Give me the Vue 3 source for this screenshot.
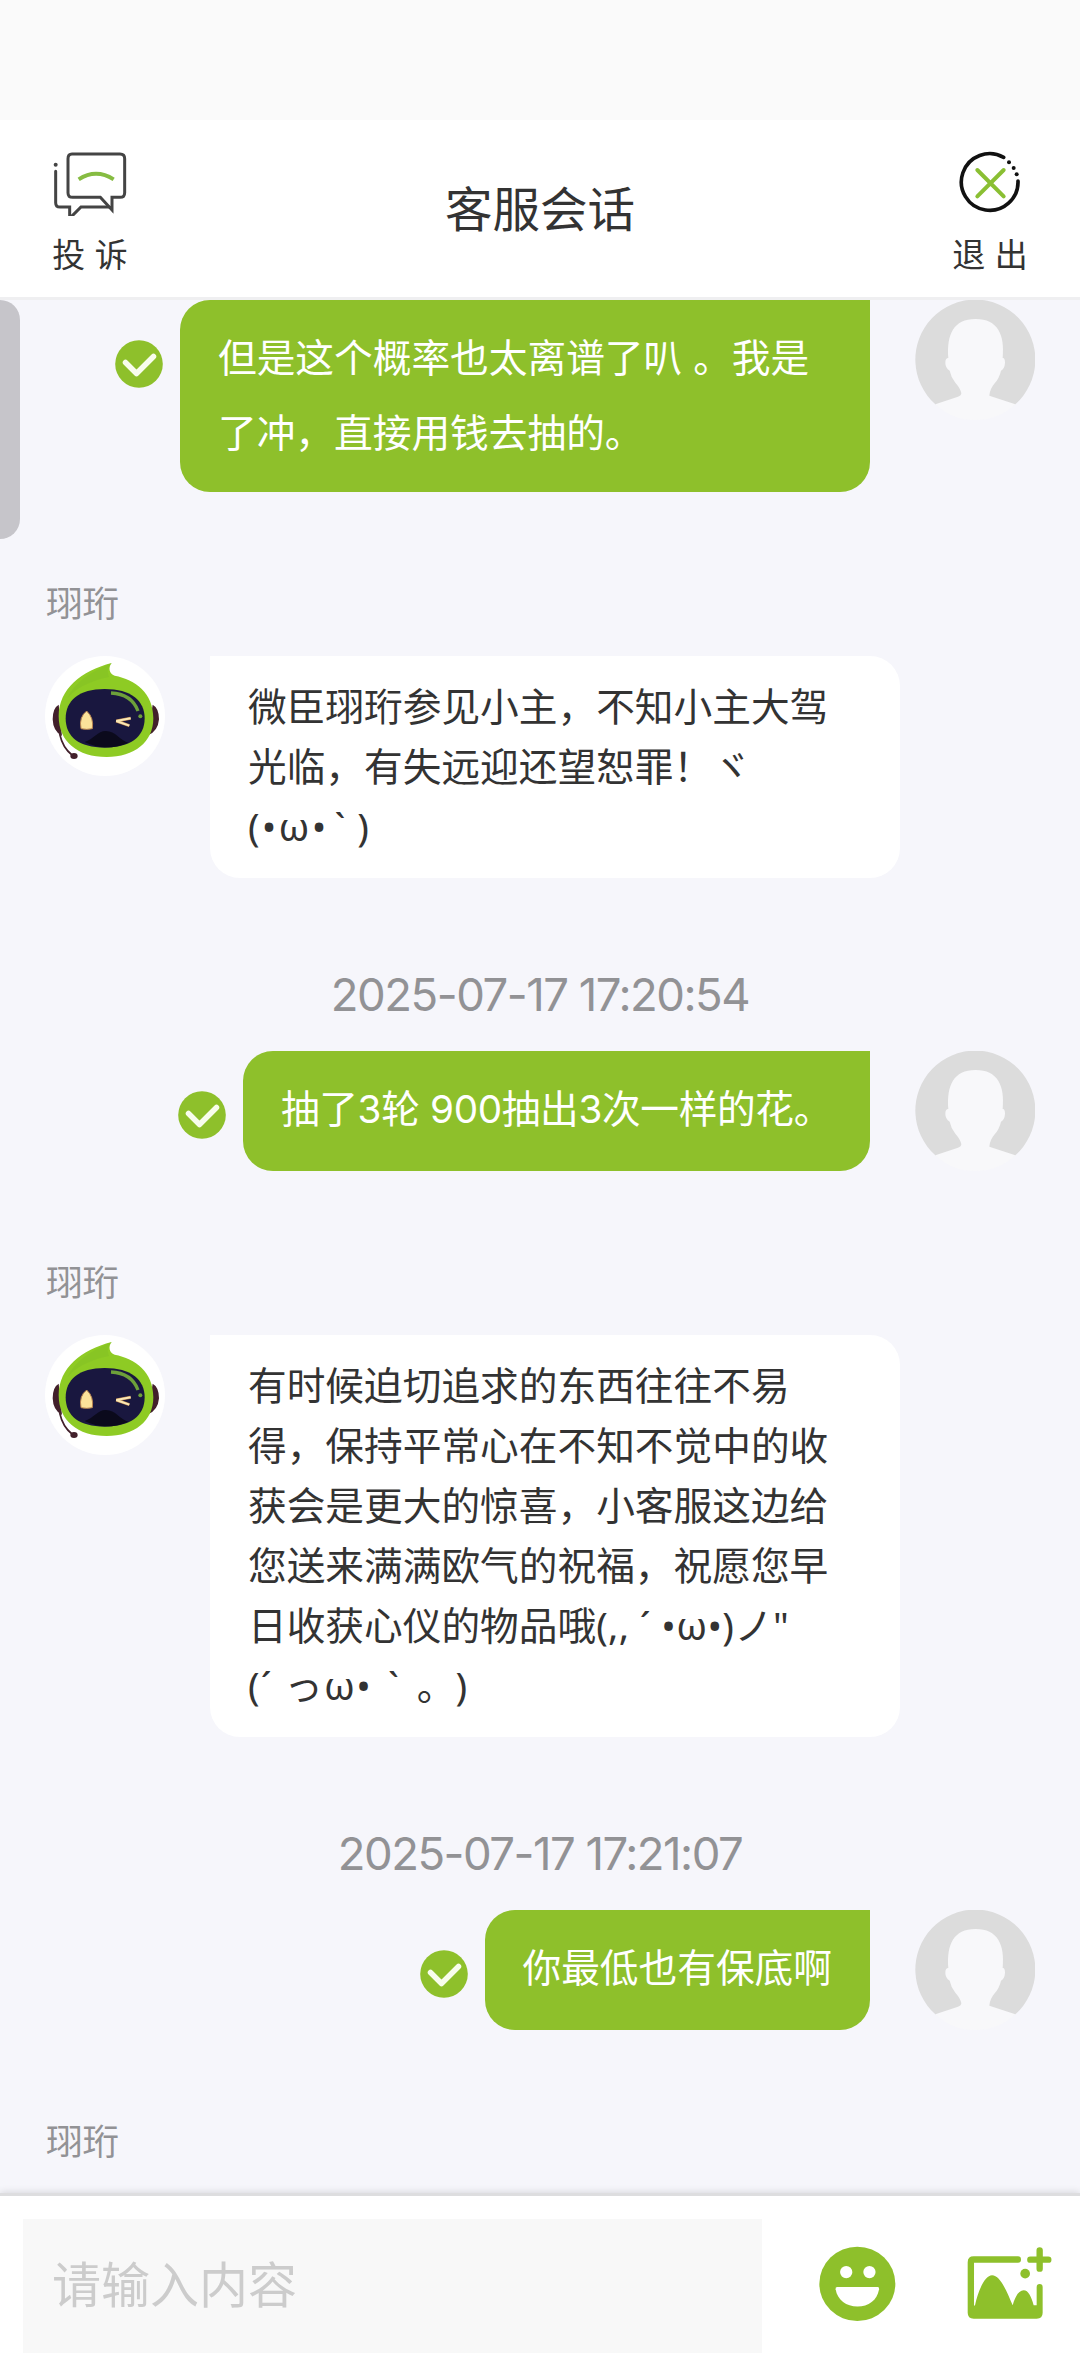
<script setup>
const messages = [
  { id: 1, from: 'user', wide: true, lines: [[{ t: '但是这个概率也太离谱了叭 。我是' }], [{ t: '了冲，直接用钱去抽的。' }]] },
  { id: 2, from: 'bot', lines: [[{ t: '微臣珝珩参见小主，不知小主大驾' }], [{ t: '光临，有失远迎还望恕罪！ヾ' }], [{ t: '(•ω•', c: 'face short' }, { t: '`', c: 'face tick' }, { t: ')', c: 'face' }]] },
  { id: 3, from: 'user', time: '2025-07-17 17:20:54', lines: [[{ t: '抽了3轮 900抽出3次一样的花。', c: 'mixed' }]] },
  {
    id: 4, from: 'bot', lines: [
      [{ t: '有时候迫切追求的东西往往不易' }],
      [{ t: '得，保持平常心在不知不觉中的收' }],
      [{ t: '获会是更大的惊喜，小客服这边给' }],
      [{ t: '您送来满满欧气的祝福，祝愿您早' }],
      [{ t: '日收获心仪的物品哦' }, { t: '(,, ´ •ω•)ノ"', c: 'face long' }],
      [{ t: '(´ っω•', c: 'face loose' }, { t: '`', c: 'face tick wide-tick' }, { t: '。)', c: 'face' }]
    ]
  },
  { id: 5, from: 'user', time: '2025-07-17 17:21:07', lines: [[{ t: '你最低也有保底啊' }]] },
  { id: 6, from: 'bot', lines: [] }
]
</script>

<template>
  <div class="screen">
    <div class="status"></div>
    <header class="header">
      <div class="action">
        <svg class="action-icon" viewBox="159 153 228 195" width="76" height="65" fill="none" stroke="#444" stroke-width="9">
          <path d="M219 162H363Q377 162 377 176V278Q377 292 363 292H339V330L304 292H221Q207 292 207 278V176Q207 162 219 162Z" />
          <path d="M170 214V308Q170 321 183 321H212V352M218 349L246 321H330" stroke-linecap="round" />
          <circle cx="170" cy="194" r="6" fill="#444" stroke="none" />
          <path d="M239 238Q291 205 344 238" stroke="#86bc42" stroke-width="12" />
        </svg>
        <span class="action-text">投 诉</span>
      </div>
      <h1 class="title">客服会话</h1>
      <div class="action">
        <svg class="action-icon" viewBox="696 153 228 195" width="76" height="65" fill="none" stroke-linecap="round">
          <path d="M851 172A85 85 0 1 0 894 243" stroke="#111" stroke-width="11" />
          <g fill="#111"><circle cx="867" cy="187" r="6" /><circle cx="881" cy="204" r="6" /><circle cx="890" cy="223" r="6" /></g>
          <path d="M772 210L851 289M851 210L772 289" stroke="#8abf33" stroke-width="12" />
        </svg>
        <span class="action-text">退 出</span>
      </div>
    </header>

    <main class="chat">
      <div class="scrollbar"></div>
      <section v-for="m in messages" :key="m.id" class="message">
        <div v-if="m.time" class="time">{{ m.time }}</div>
        <div v-if="m.from === 'bot'" class="name">珝珩</div>
        <div v-if="m.lines.length" class="row" :class="m.from">
          <svg v-if="m.from === 'bot'" class="avatar" viewBox="45 48 360 360">
            <circle cx="225" cy="228" r="180" fill="#fff" />
            <path d="M86 194Q68 204 68 238Q69 274 96 288ZM368 194Q387 204 387 238Q384 274 354 286Z" fill="#42202b" />
            <path d="M245 69C234 82 237 101 254 107C316 119 370 158 370 235C370 307 313 351 230 351C143 351 86 305 86 228C87 146 154 93 245 69Z" fill="#8ecb24" />
            <path d="M245 69C180 98 133 126 113 174C134 147 180 122 237 111C230 93 234 82 245 69Z" fill="#7fb925" opacity=".35" />
            <path d="M224 147C303 147 344 182 344 235C344 291 301 323 224 323C147 323 107 291 107 235C107 182 147 147 224 147Z" fill="#19173f" />
            <path d="M164 306C190 298 204 273 227 273C258 273 268 301 295 308Q225 337 164 306Z" fill="#0b0a1c" />
            <path d="M153 266Q146 231 170 213Q192 233 187 266Q170 270 153 266Z" fill="#fbe29a" stroke="#b98450" stroke-width="3" />
            <path d="M302 235L259 243L298 257" fill="none" stroke="#b98450" stroke-width="9" stroke-linejoin="bevel" />
            <path d="M302 235L259 243L298 257" fill="none" stroke="#fbe8b4" stroke-width="6" stroke-linejoin="bevel" />
            <path d="M243 159Q305 162 324 213" fill="none" stroke="#6da03a" stroke-width="10" />
            <circle cx="331" cy="229" r="6" fill="#6da03a" />
            <path d="M89 282Q98 323 126 345" fill="none" stroke="#42202b" stroke-width="5" />
            <ellipse cx="132" cy="348" rx="11" ry="9" fill="#42202b" />
          </svg>
          <svg v-if="m.from === 'user'" class="sent" viewBox="-24 -24 48 48">
            <circle r="23.8" fill="#8ec02b" />
            <path d="M-13.5 -1.5L-2.5 9.5L14.5 -7.5" fill="none" stroke="#f8fdec" stroke-width="5.5" stroke-linecap="round" stroke-linejoin="round" />
          </svg>
          <div class="bubble" :class="{ wide: m.wide }">
            <p v-for="(line, i) in m.lines" :key="i"><span v-for="(s, j) in line" :key="j" :class="s.c">{{ s.t }}</span></p>
          </div>
          <svg v-if="m.from === 'user'" class="avatar" viewBox="585 600 360 360">
            <path d="M646 913A180 180 0 1 1 886 913Q825 942 765 958Q705 942 646 913Z" fill="#dcdcdc" />
            <path d="M646 913L714 890Q724 887 724 880Q722 866 706 848Q693 832 689 812Q676 804 676 788Q676 774 685 774C680 704 700 657 767 657C833 657 855 704 848 774Q855 773 855 788Q854 806 843 812Q838 834 824 850Q809 868 808 887L886 913Q835 960 765 960Q695 960 646 913Z" fill="#f8f8fa" />
          </svg>
        </div>
      </section>
    </main>

    <footer class="footer">
      <div class="input">请输入内容</div>
      <svg class="emoji" viewBox="237 258 232 228" width="77" height="76">
        <ellipse cx="352.500" cy="371.500" rx="114.500" ry="112" fill="#8ec02b" />
        <g fill="#fff"><circle cx="319" cy="336" r="18.500" /><circle cx="389" cy="336" r="18.500" /><path d="M292 381H414Q419 381 418 388C412 422 386 440 353 440C319 440 293 421 287 388Q286 381 292 381Z" /></g>
      </svg>
      <svg class="photo" viewBox="680 258 255 220" width="85" height="73.300" fill="#8ec02b">
        <path d="M701 299V437L704 436C714 388 735 346 755 346C779 346 798 391 817 436C825 408 836 391 850 391C864 391 873 410 880 436H889V382Q889 372 898 372Q907 372 907 382V458Q907 476 889 476H700Q682 476 682 458V307Q682 289 700 289H833Q842 289 842 299Q842 308 833 308H701Z" />
        <circle cx="854.500" cy="341" r="14.500" />
        <path d="M898 271V326M870 299H924" fill="none" stroke="#8ec02b" stroke-width="19" stroke-linecap="round" />
      </svg>
    </footer>
  </div>
</template>

<style>
body { margin: 0; }
</style>

<style scoped>
.screen {
  width: 1080px;
  height: 2376px;
  display: flex;
  flex-direction: column;
  overflow: hidden;
  background: #f6f6fb;
  color: #333;
  font-family: Inter, "Noto Sans CJK SC", sans-serif;
  text-spacing-trim: space-all;
}
.status { flex: none; height: 120px; background: #fafafa; }
.header {
  flex: none;
  box-sizing: border-box;
  height: 180px;
  display: flex;
  justify-content: space-between;
  background: #fff;
  border-bottom: 3px solid #efeff1;
}
.action { width: 180px; display: flex; flex-direction: column; align-items: center; padding-top: 31px; box-sizing: border-box; }
.action-icon { display: block; }
.action-text { margin-top: 15px; font-size: 33px; line-height: 48px; white-space: pre; }
.title { margin: 0; padding-top: 3px; font-size: 47.5px; font-weight: 400; line-height: 174px; }
.chat { position: relative; flex: 1; min-height: 0; overflow: hidden; }
.scrollbar { position: absolute; left: 0; top: 0; width: 20px; height: 239px; background: #c6c5ca; border-radius: 0 20px 20px 0; }
.name { height: 60px; margin-top: 82px; padding-left: 46px; margin-bottom: 22px; font-size: 36.5px; line-height: 60px; color: #929295; }
.time { height: 60px; margin-top: 87px; margin-bottom: 26px; font-size: 45.5px; line-height: 60px; text-align: center; color: #929295; letter-spacing: -1.5px; white-space: pre; }
.row { display: flex; align-items: flex-start; }
.row.user { justify-content: flex-end; padding-right: 45px; }
.row.bot { padding-left: 45px; }
.avatar { flex: none; display: block; width: 120px; height: 120px; }
.sent { flex: none; width: 48px; height: 48px; margin: 40px 17px 0 0; }
.bubble { box-sizing: border-box; min-height: 120px; padding: 21px 38px; font-size: 38.7px; white-space: pre; }
.bubble p { margin: 0; }
.user .bubble { margin-right: 45px; max-width: 690px; line-height: 75px; color: #fff; background: #8ec02b; border-radius: 30px 0 30px 30px; }
.user .bubble.wide { width: 690px; }
.bot .bubble { margin-left: 45px; width: 690px; line-height: 60px; background: #fff; border-radius: 0 30px 30px 30px; }
.bot .bubble p { height: 60px; }
.mixed { letter-spacing: -.35px; }
.face { font-family: "Noto Sans", "Noto Sans CJK SC", sans-serif; line-height: 1; }
.face.short { letter-spacing: 2.2px; }
.face.long { letter-spacing: .3px; }
.face.loose { letter-spacing: 1.2px; }
.face.tick { margin: 0 12px 0 6px; }
.face.wide-tick { margin: 0 18px 0 16px; }
.footer {
  flex: none;
  box-sizing: border-box;
  height: 180px;
  display: flex;
  align-items: flex-start;
  padding: 23px 0 0 23px;
  position: relative;
  background: #fff;
  box-shadow: 0 -3px 0 #dddddf, 0 -4px 7px rgba(0, 0, 0, .13);
}
.input { box-sizing: border-box; width: 739px; height: 134px; padding-left: 29px; background: #f8f8f8; color: #ccc; font-size: 49px; line-height: 133px; }
.emoji { margin: 27px 0 0 57px; }
.photo { margin: 27px 0 0 71px; }
</style>
